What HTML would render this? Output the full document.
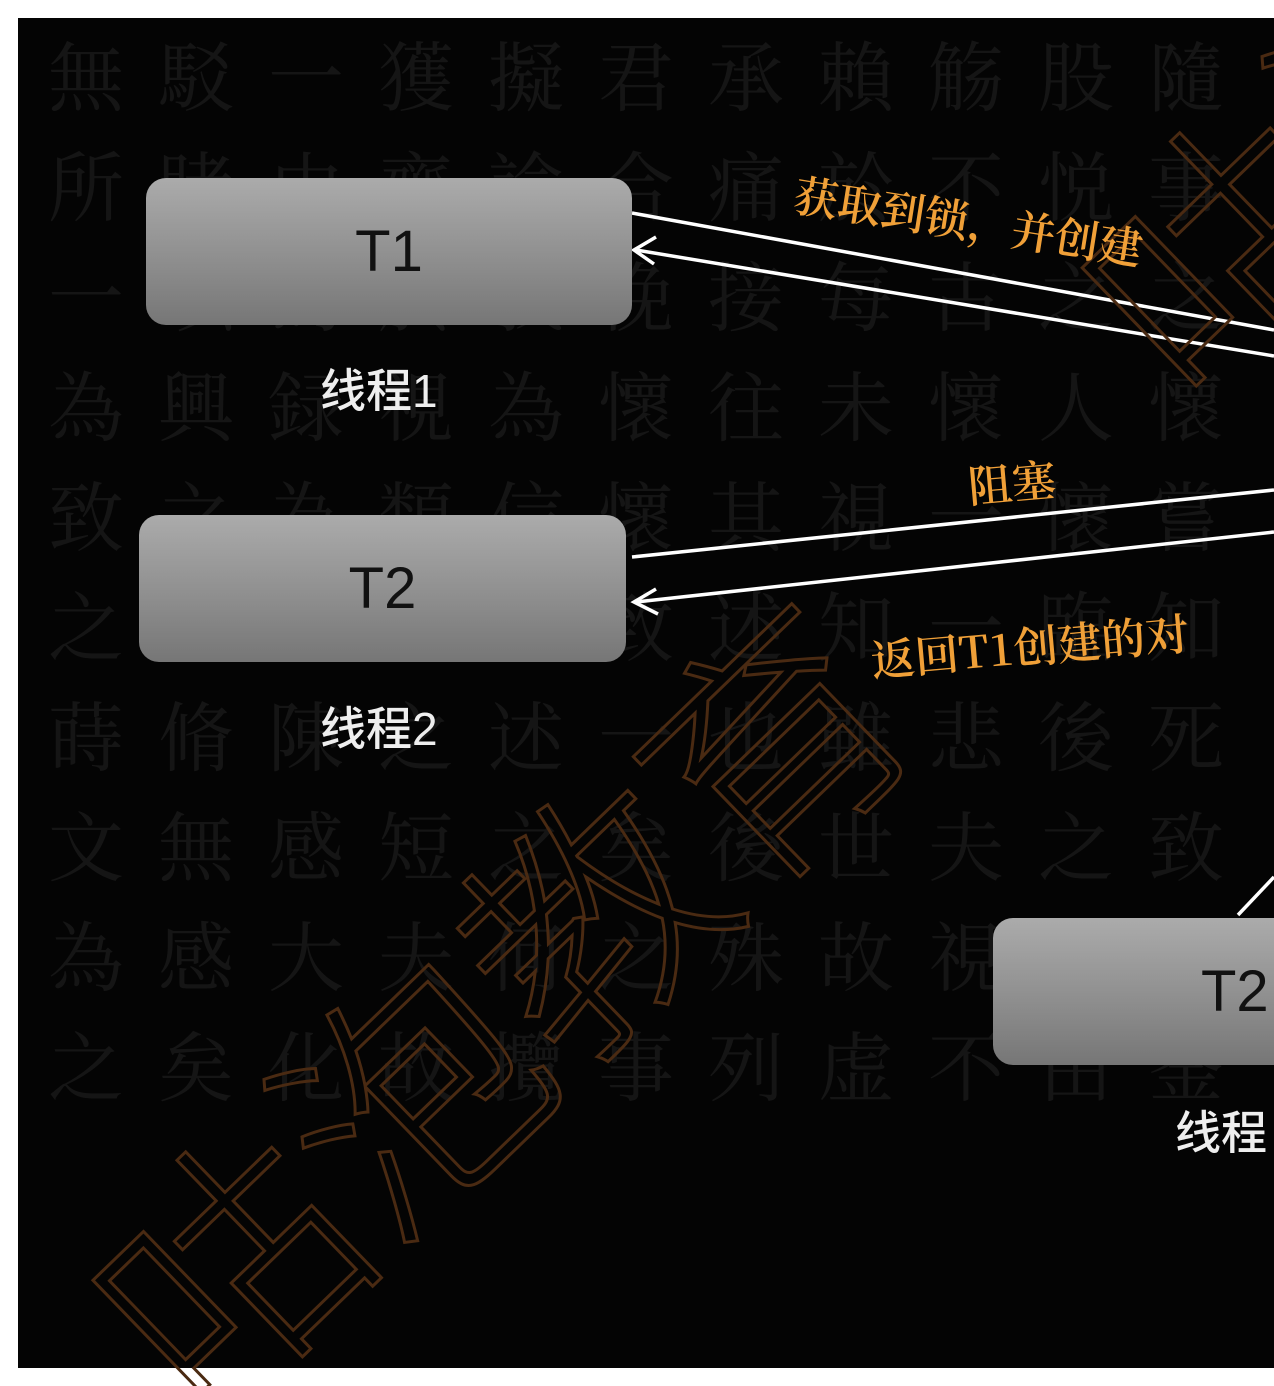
<!DOCTYPE html>
<html><head><meta charset="utf-8"><style>
body{margin:0;background:#fff;width:1274px;height:1386px;overflow:hidden;position:relative;font-family:"Liberation Sans","Noto Sans CJK SC",sans-serif}
#bg{position:absolute;left:18px;top:18px;width:1256px;height:1350px;background:#040404;overflow:hidden}
.cal{position:absolute;color:#151515;font-family:"Noto Serif CJK SC",serif;font-size:76px;line-height:110px;width:1300px;left:30px;top:0;letter-spacing:34px;word-break:break-all;height:1200px;overflow:hidden}
.box{position:absolute;border-radius:20px;background:linear-gradient(#ababab,#8c8c8c 60%,#767676);color:#111;font-size:58px;text-align:center}
.lab{position:absolute;color:#eee;font-size:46px;font-family:"Liberation Sans","Noto Sans CJK SC",sans-serif;font-weight:500}
.or{position:absolute;color:#f0a038;font-size:44px;font-family:"Noto Serif CJK SC",serif;font-weight:600;white-space:nowrap;transform-origin:0 0}
</style></head><body>
<div id="bg">
<div class="cal">無駁一獲擬君承賴觞股隨所睹由齊諭合痛於不悦事一以為於我俛接每古之之為興録視為懷往未懷人懷致之為類信懷其視一懷嘗之將然陳述致述知一臨知蒔脩陳之述一也雖悲後死文無感短之矣後世夫之致為感大夫何之殊故視為悼之矣化故攬事列虚不由崟</div>
</div>
<svg style="position:absolute;left:0;top:0;overflow:hidden" width="1274" height="1386">
<g stroke="#fff" stroke-width="3.5" fill="none">
<line x1="632" y1="213" x2="1274" y2="330"/>
<line x1="636" y1="250" x2="1274" y2="356"/>
<polyline points="656,237 634,250 654,264"/>
<line x1="632" y1="557" x2="1274" y2="490"/>
<line x1="636" y1="602" x2="1274" y2="532"/>
<polyline points="656,589 634,602 658,614"/>
<line x1="1238" y1="915" x2="1274" y2="877"/>
</g>
<text x="0" y="0" transform="translate(205,1425) rotate(-44)" font-size="252" font-family="Noto Sans CJK SC" font-weight="300" stroke="#4a2a12" fill="none" stroke-width="3">咕泡教育</text>
<text x="0" y="0" transform="translate(1200,420) rotate(-44)" font-size="265" font-family="Noto Sans CJK SC" font-weight="300" stroke="#4a2a12" fill="none" stroke-width="3">咕泡</text>
</svg>
<div class="box" style="left:146px;top:178px;width:486px;height:147px;line-height:147px">T1</div>
<div class="box" style="left:139px;top:515px;width:487px;height:147px;line-height:147px">T2</div>
<div class="box" style="left:993px;top:918px;width:281px;height:147px;line-height:147px;text-align:left;text-indent:208px;border-radius:20px 0 0 20px;overflow:hidden">T2</div>
<div class="lab" style="left:320px;top:355px">线程1</div>
<div class="lab" style="left:320px;top:693px">线程2</div>
<div class="lab" style="left:1175px;top:1097px">线程</div>
<div class="or" style="left:800px;top:160px;transform:rotate(9deg)">获取到锁，并创建</div>
<div class="or" style="left:965px;top:452px;transform:rotate(-5deg)">阻塞</div>
<div class="or" style="left:868px;top:626px;transform:rotate(-5deg)">返回T1创建的对</div>
</body></html>
